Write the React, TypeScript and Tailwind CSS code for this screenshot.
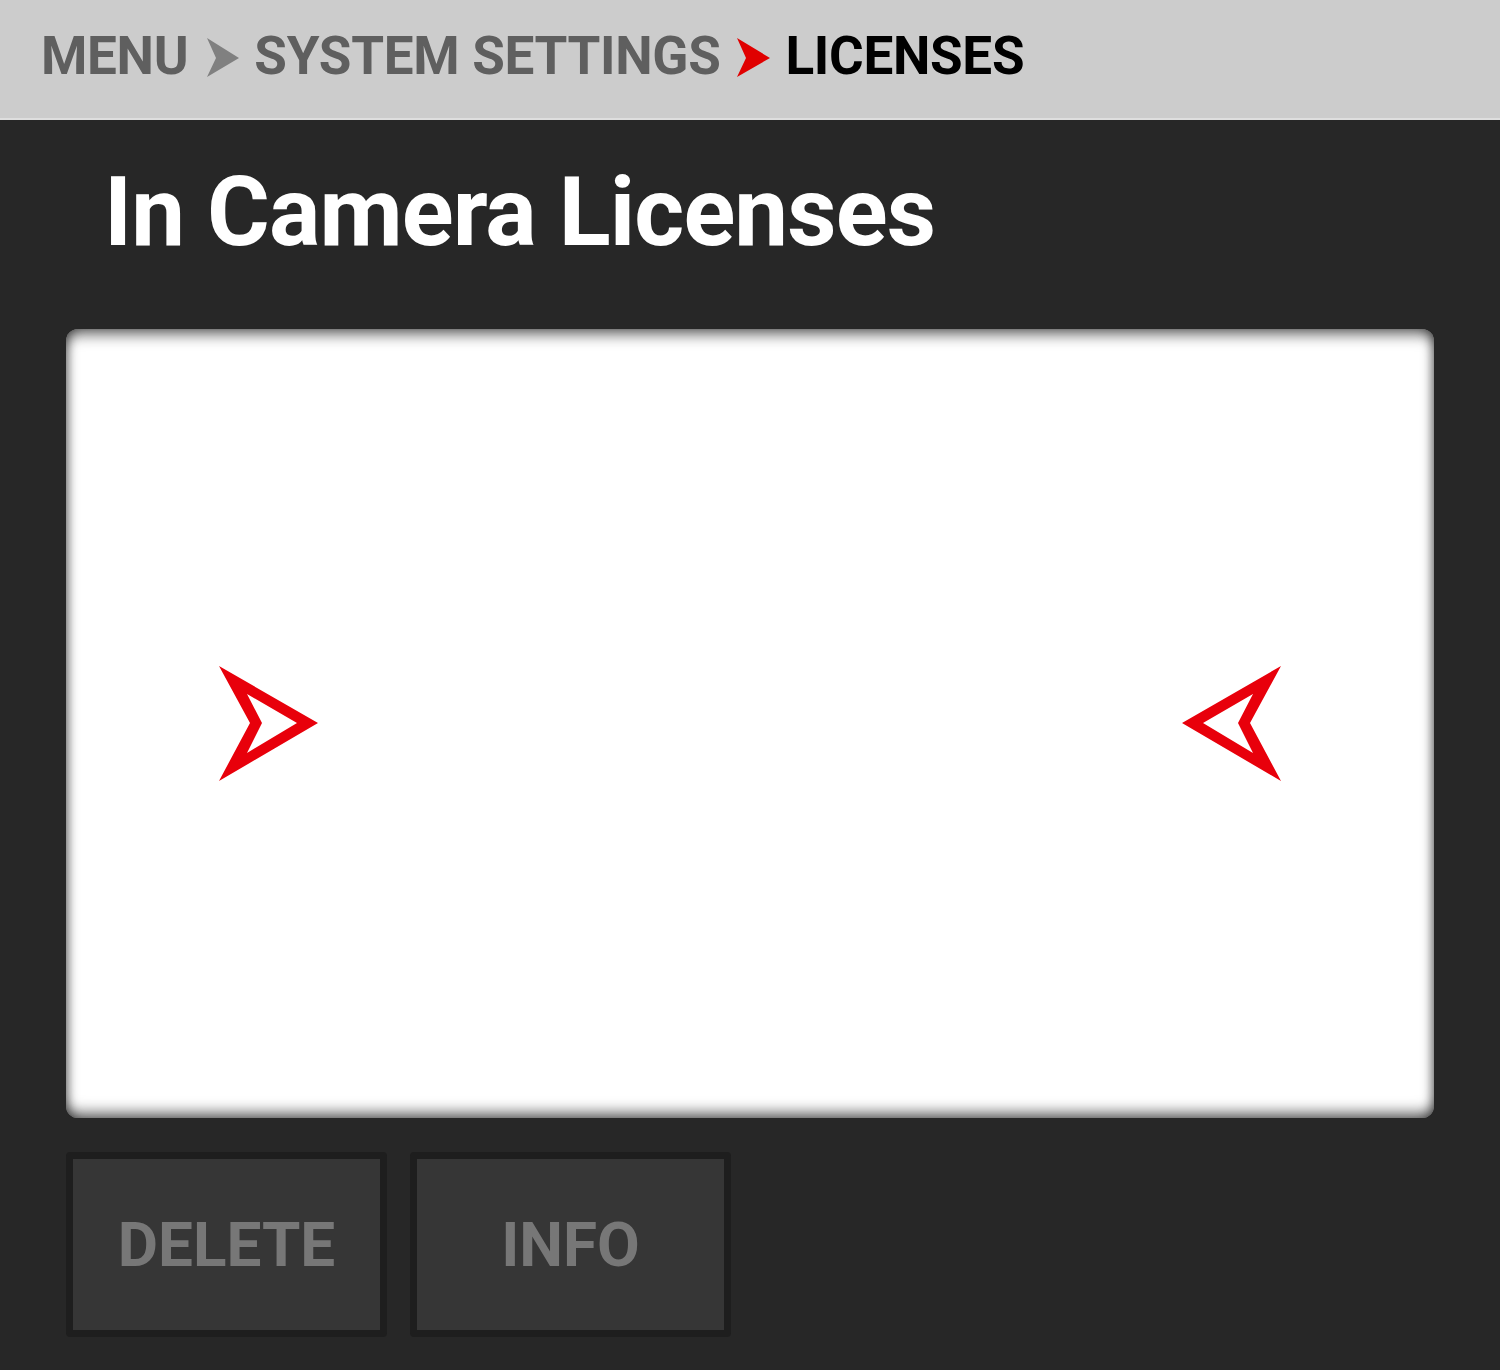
export default function App() {
  const font = { fontFamily: 'Roboto, "Liberation Sans", sans-serif' };

  return (
    <div className="min-h-screen w-full bg-[#272727]" style={font}>
      {/* Breadcrumb bar */}
      <div className="h-[120px] bg-[#cccccc] border-b-2 border-[#dedede] flex items-start pt-[30px] pl-[41px]">
        <div className="flex items-center text-[53px] font-bold leading-none tracking-[-0.3px]">
          <span className="text-[#5f5f5f]">MENU</span>
          <svg width="32" height="39" viewBox="0 0 32 39" className="ml-[19px] mr-[15px] mt-[1px]">
            <path d="M0 0 L32 20 L0 39 L9 20 Z" fill="#808080" />
          </svg>
          <span className="text-[#5f5f5f]">SYSTEM SETTINGS</span>
          <svg width="33" height="39" viewBox="0 0 33 39" className="ml-[17px] mr-[15px] mt-[1px]">
            <path d="M0 0 L33 20 L0 39 L9 20 Z" fill="#e00000" />
          </svg>
          <span className="text-black">LICENSES</span>
        </div>
      </div>

      {/* Title */}
      <h1 className="mt-[44px] pl-[104px] text-[96px] font-bold leading-none tracking-[-0.9px] text-white">
        In Camera Licenses
      </h1>

      {/* License panel */}
      <div className="mt-[69px] mx-[66px] h-[789px] rounded-[12px] bg-white shadow-[inset_0_12px_14px_-6px_rgba(0,0,0,0.55),inset_0_-12px_14px_-6px_rgba(0,0,0,0.55),inset_8px_0_12px_-6px_rgba(0,0,0,0.45),inset_-8px_0_12px_-6px_rgba(0,0,0,0.45)] flex items-center justify-between px-[152px]">
        <svg width="101" height="117" viewBox="0 0 101 117">
          <path
            fillRule="evenodd"
            d="M1 1 L100 58 L1 116 L32 58 Z M29 29 L79 58 L29 88 L44 58 Z"
            fill="#e8000b"
          />
        </svg>
        <svg width="101" height="117" viewBox="0 0 101 117">
          <path
            fillRule="evenodd"
            d="M100 1 L1 58 L100 116 L69 58 Z M72 29 L22 58 L72 88 L57 58 Z"
            fill="#e8000b"
          />
        </svg>
      </div>

      {/* Buttons */}
      <div className="mt-[34px] ml-[66px] flex gap-[23px]">
        <button className="w-[321px] h-[185px] rounded-[4px] border-[7px] border-[#1e1e1e] bg-[#363636] flex items-center justify-center text-[62px] font-bold leading-none text-[#777777]">
          DELETE
        </button>
        <button className="w-[321px] h-[185px] rounded-[4px] border-[7px] border-[#1e1e1e] bg-[#363636] flex items-center justify-center text-[62px] font-bold leading-none text-[#777777]">
          INFO
        </button>
      </div>
    </div>
  );
}
